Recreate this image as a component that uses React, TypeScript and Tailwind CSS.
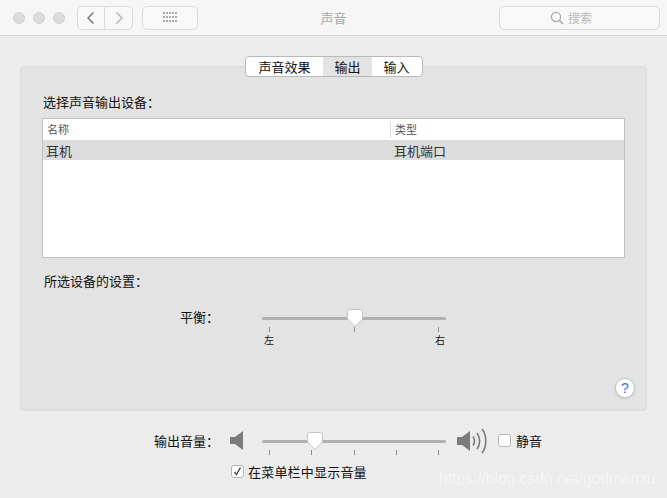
const cjk = "font-['Noto_Sans_CJK_SC','Liberation_Sans',sans-serif]";

const Thumb = () => (
  <svg width="18" height="22" viewBox="0 0 18 22" className="absolute top-0 left-0">
    <path
      d="M3.5 1.5h11a2 2 0 0 1 2 2v7.5L9 18.5 1.5 11V3.5a2 2 0 0 1 2-2z"
      fill="#fff"
      stroke="#c4c4c4"
    />
  </svg>
);

const Slider = ({ value, ticks }: { value: number; ticks: number[] }) => (
  <div className="relative w-[184px] h-[24px]">
    <div className="absolute left-0 right-0 top-[7px] h-[3px] rounded-full bg-[#b1b1b1]" />
    {ticks.map((t) => (
      <div key={t} className="absolute top-[17px] w-px h-[5px] bg-[#8e8e8e]" style={{ left: t }} />
    ))}
    <div className="absolute top-[-2px]" style={{ left: value }}>
      <Thumb />
    </div>
  </div>
);

const Light = () => <div className="w-3 h-3 rounded-full bg-[#dcdcdc] border border-[#d2d2d2]" />;

const Checkbox = ({ checked }: { checked?: boolean }) => (
  <div className="w-[13px] h-[13px] rounded-[3px] bg-white border border-[#b5b5b5] flex items-center justify-center">
    {checked && (
      <svg width="11" height="11" viewBox="0 0 11 11">
        <path d="M2.5 6l2 2.6L8.5 1.5" fill="none" stroke="#444" strokeWidth="1.4" />
      </svg>
    )}
  </div>
);

export default function App() {
  return (
    <div className={`relative w-[667px] h-[498px] overflow-hidden bg-[#ececec] text-[13px] leading-none text-[#111] ${cjk}`}>
      {/* Barre de titre */}
      <header className="relative flex items-center h-[36px] pl-[13px] bg-[#f6f6f6] border-b border-[#d2d2d2]">
        <div className="flex gap-2">
          <Light />
          <Light />
          <Light />
        </div>
        <div className="flex ml-[12px]">
          <div className="w-[28px] h-[24px] flex items-center justify-center rounded-l-[5px] border border-[#dadada] bg-[#f8f8f8]">
            <svg width="10" height="14" viewBox="0 0 10 14">
              <path d="M7.5 1.500L2 7l5.500 5.500" fill="none" stroke="#6f6f6f" strokeWidth="1.4" />
            </svg>
          </div>
          <div className="w-[28px] h-[24px] flex items-center justify-center rounded-r-[5px] border border-l-0 border-[#dadada] bg-[#f8f8f8]">
            <svg width="10" height="14" viewBox="0 0 10 14">
              <path d="M2.500 1.500L8 7l-5.500 5.500" fill="none" stroke="#b4b4b4" strokeWidth="1.4" />
            </svg>
          </div>
        </div>
        <div className="ml-[9px] w-[56px] h-[24px] flex items-center justify-center rounded-[5px] border border-[#dadada] bg-[#f8f8f8]">
          <svg width="15" height="11" viewBox="0 0 15 11" fill="#a9a9a9">
            {[0, 4, 8].map((y) =>
              [0, 3, 6, 9, 12].map((x) => <rect key={`${x}-${y}`} x={x} y={y} width="2" height="2" />)
            )}
          </svg>
        </div>
        <span className="absolute left-0 right-0 text-center text-[#a8a8a8] text-[13px]">声音</span>
        <div className="ml-auto mr-[7px] w-[161px] h-[24px] flex items-center justify-center gap-[4px] pr-[17px] rounded-[5px] border border-[#dadada] bg-[#f8f8f8] text-[#b9b9b9] text-[12px]">
          <svg width="14" height="14" viewBox="0 0 14 14" fill="none" stroke="#a8a8a8" strokeWidth="1.2">
            <circle cx="6" cy="6" r="4.6" />
            <path d="M9.4 9.4L13 13" strokeWidth="1.5" />
          </svg>
          <span>搜索</span>
        </div>
      </header>

      {/* Panneau */}
      <section className="relative mx-[20px] mt-[30px] h-[345px] rounded-[4px] bg-[#e3e3e3] border border-[#dcdcdc] px-[21px] pt-[28px]">
        <div className="absolute left-[224px] top-[-11px] flex h-[21px] w-[178px] rounded-[4px] border border-[#b9b9b9] bg-white overflow-hidden text-[13px]">
          <div className="w-[77px] flex items-center justify-center">声音效果</div>
          <div className="w-[49px] flex items-center justify-center bg-[#e3e3e3]">输出</div>
          <div className="flex-1 flex items-center justify-center pr-[1px]">输入</div>
        </div>

        <p className="h-[23px] leading-[13px] ml-[1px]">选择声音输出设备：</p>
        <div className="w-[583px] h-[140px] bg-white border border-[#c2c2c2]">
          <div className="flex h-[21px] items-center text-[11px] text-[#555]">
            <div className="w-[347px] pl-[4px]">名称</div>
            <div className="h-[17px] border-l border-[#dcdcdc] pl-[4px] flex items-center">类型</div>
          </div>
          <div className="flex h-[20px] items-center bg-[#dcdcdc] text-[#333]">
            <div className="w-[347px] pl-[3px]">耳机</div>
            <div className="pl-[4px]">耳机端口</div>
          </div>
        </div>

        <p className="mt-[16px] ml-[2px]">所选设备的设置：</p>
        <div className="mt-[23px] flex">
          <span className="ml-[138px] w-[82px] leading-[13px]">平衡：</span>
          <div>
            <Slider value={84} ticks={[7, 92, 176]} />
            <div className="flex justify-between w-[184px] pl-[2px] pr-[1px] mt-[1px] text-[10px]">
              <span>左</span>
              <span>右</span>
            </div>
          </div>
        </div>

        <div className="absolute right-[11px] bottom-[12px] w-[20px] h-[20px] rounded-full bg-white border border-[#c6c6c6] shadow-sm flex items-center justify-center text-[#3b6ff0] text-[14px] font-['Liberation_Sans',sans-serif]">
          ?
        </div>
      </section>

      {/* Volume */}
      <div className="mt-[23px] flex items-start pl-[154px]">
        <span className="w-[76px] leading-[13px]">输出音量：</span>
        <svg width="14" height="19" viewBox="0 0 14 19" className="mt-[-3px]">
          <path d="M0 6h5l8-6v19l-8-6H0z" fill="#7b7b7b" />
        </svg>
        <div className="ml-[18px] mt-[-1px]">
          <Slider value={44} ticks={[7, 49, 92, 134, 176]} />
        </div>
        <svg width="32" height="26" viewBox="0 0 32 26" fill="none" stroke="#7b7b7b" strokeWidth="1.6" className="ml-[11px] mt-[-6px]">
          <path d="M0 9h5l8-6v20l-8-6H0z" fill="#7b7b7b" stroke="none" />
          <path d="M16 8.500c2 2.500 2 6.500 0 9" />
          <path d="M20 5c3.500 4.500 3.500 11.500 0 16" />
          <path d="M25 1c5 6 5 18 0 24" />
        </svg>
        <div className="ml-[9px] flex items-center gap-[5px]">
          <Checkbox />
          <span>静音</span>
        </div>
      </div>
      <div className="mt-[8px] ml-[231px] flex items-center gap-[4px]">
        <Checkbox checked />
        <span className="tracking-[0.2px]">在菜单栏中显示音量</span>
      </div>

      <span className="absolute left-[439px] top-[469px] text-[15.6px] leading-[20px] text-white/50 font-['Liberation_Sans',sans-serif]">
        https://blog.csdn.net/godmanxu
      </span>
    </div>
  );
}
